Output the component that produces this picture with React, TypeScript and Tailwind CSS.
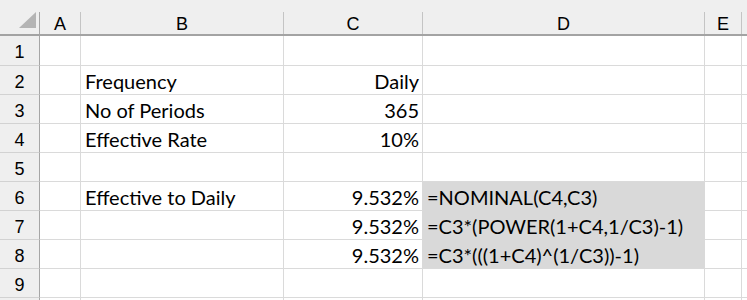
import React from "react";

type Cell = { text?: string; align?: "left" | "right"; fill?: boolean };

const widths = ["w-[41px]", "w-[203px]", "w-[139px]", "w-[282px]", "w-[37px]"];
const letters = ["A", "B", "C", "D", "E"];

const rows: Cell[][] = [
  [{}, {}, {}, {}, {}],
  [{}, { text: "Frequency" }, { text: "Daily", align: "right" }, {}, {}],
  [{}, { text: "No of Periods" }, { text: "365", align: "right" }, {}, {}],
  [{}, { text: "Effective Rate" }, { text: "10%", align: "right" }, {}, {}],
  [{}, {}, {}, {}, {}],
  [
    {},
    { text: "Effective to Daily" },
    { text: "9.532%", align: "right" },
    { text: "=NOMINAL(C4,C3)", fill: true },
    {},
  ],
  [{}, {}, { text: "9.532%", align: "right" }, { text: "=C3*(POWER(1+C4,1/C3)-1)", fill: true }, {}],
  [{}, {}, { text: "9.532%", align: "right" }, { text: "=C3*(((1+C4)^(1/C3))-1)", fill: true }, {}],
  [{}, {}, {}, {}, {}],
  [{}, {}, {}, {}, {}],
];

const cellFont = { fontFamily: "Lato, 'Open Sans', sans-serif" };
const headFont = { fontFamily: "'Liberation Sans', Arial, sans-serif" };

function Corner() {
  return (
    <div className="w-[40px] h-[22px] border-r border-[#a6a6a6] relative shrink-0">
      <svg width="40" height="24" className="absolute left-0 bottom-[2px]">
        <polygon points="19,20 36,20 36,4" fill="#b4b4b4" />
      </svg>
    </div>
  );
}

export default function App() {
  return (
    <div className="w-[747px] h-[300px] overflow-hidden bg-white text-black">
      {/* column header strip */}
      <div className="flex items-end h-[36px] bg-[#efefef] border-b-2 border-[#a3a3a3]">
        <Corner />
        {letters.map((l, i) => (
          <div
            key={l}
            className={`${widths[i]} h-[22px] shrink-0 border-r border-[#c4c4c4] flex items-center justify-center text-[18px] leading-none pt-[2px]`}
            style={headFont}
          >
            {l}
          </div>
        ))}
        <div className="flex-1" />
      </div>

      {rows.map((cells, r) => (
        <div key={r} className={`flex ${r === 0 ? "h-[30px]" : "h-[29px]"}`}>
          <div
            className="w-[40px] shrink-0 bg-[#efefef] border-r border-b border-r-[#a6a6a6] border-b-[#d2d2d2] flex items-center justify-center text-[18px] leading-none pt-[3px]"
            style={headFont}
          >
            {r < 9 ? r + 1 : ""}
          </div>
          {cells.map((c, i) => {
            const next = cells[i + 1];
            const rightFill = c.fill || (next && next.fill);
            const below = rows[r + 1]?.[i];
            const bottomFill = c.fill && below?.fill;
            return (
              <div
                key={i}
                className={`${widths[i]} shrink-0 border-r border-b flex items-end whitespace-nowrap overflow-visible text-[20px] leading-[24px] pb-[1px] ${
                  c.fill ? "bg-[#d9d9d9]" : "bg-white"
                } ${rightFill ? "border-r-[#d9d9d9]" : "border-r-[#dadada]"} ${
                  bottomFill ? "border-b-[#d9d9d9]" : "border-b-[#dadada]"
                } ${c.align === "right" ? "justify-end pr-[3px]" : "justify-start pl-[4px]"}`}
                style={cellFont}
              >
                {c.text}
              </div>
            );
          })}
          <div className="flex-1 border-b border-[#dadada]" />
        </div>
      ))}
    </div>
  );
}
